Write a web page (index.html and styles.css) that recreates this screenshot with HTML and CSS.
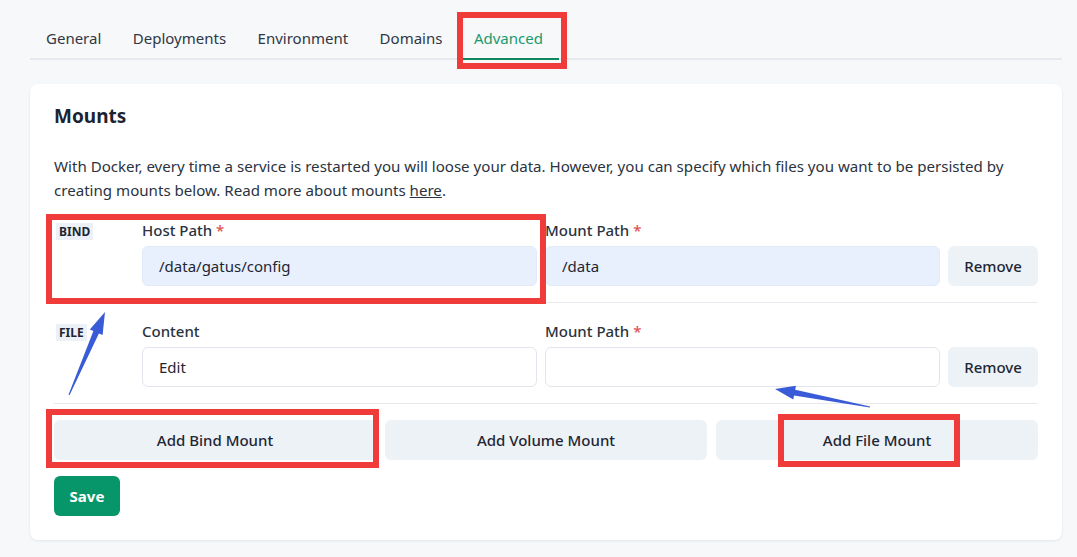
FILE: index.html
```html
<!DOCTYPE html>
<html lang="en">
<head>
<meta charset="utf-8">
<title>Advanced - Mounts</title>
<link rel="stylesheet" href="styles.css">
</head>
<body>
<div class="page">
  <nav class="tabs">
    <a class="tab">General</a>
    <a class="tab">Deployments</a>
    <a class="tab">Environment</a>
    <a class="tab">Domains</a>
    <a class="tab active">Advanced</a>
  </nav>

  <section class="card">
    <h2 class="title">Mounts</h2>
    <p class="desc">With Docker, every time a service is restarted you will loose your data. However, you can specify which files you want to be persisted by creating mounts below. Read more about mounts <a class="link">here</a>.</p>

    <div class="mount">
      <span class="badge">BIND</span>
      <div class="field">
        <label class="label">Host Path <span class="req">*</span></label>
        <div class="input filled">/data/gatus/config</div>
      </div>
      <div class="field">
        <label class="label">Mount Path <span class="req">*</span></label>
        <div class="input filled">/data</div>
      </div>
      <button class="btn remove">Remove</button>
    </div>

    <div class="mount">
      <span class="badge">FILE</span>
      <div class="field">
        <label class="label">Content</label>
        <div class="input">Edit</div>
      </div>
      <div class="field">
        <label class="label">Mount Path <span class="req">*</span></label>
        <div class="input"></div>
      </div>
      <button class="btn remove">Remove</button>
    </div>

    <div class="add-row">
      <button class="btn add">Add Bind Mount</button>
      <button class="btn add">Add Volume Mount</button>
      <button class="btn add">Add File Mount</button>
    </div>

    <button class="btn save">Save</button>
  </section>

  <div class="mark mark-tab"></div>
  <div class="mark mark-bind"></div>
  <div class="mark mark-addbind"></div>
  <div class="mark mark-addfile"></div>
  <svg class="arrows" width="1077" height="557" viewBox="0 0 1077 557">
    <polygon points="69.5,395.2 98.9,333.4 102.6,335.0 105,312 89.8,329.4 93.4,331.0 68.5,394.8"/>
    <polygon points="870.1,406.5 795.2,389.8 795.9,385.8 775,389 793.3,399.6 794.0,395.6 869.9,407.5"/>
  </svg>
</div>
</body>
</html>
```

FILE: styles.css
```css
* { box-sizing: border-box; }

html, body {
  margin: 0;
  padding: 0;
}

body {
  background: #f7f8fa;
  font-family: "Noto Sans", "Open Sans", sans-serif;
  color: #1f2633;
  font-size: 15px;
}

.page {
  position: relative;
  width: 1077px;
  height: 557px;
  padding: 18px 15px 0 30px;
  overflow: hidden;
}

.tabs {
  display: flex;
  border-bottom: 2px solid #e6e9ef;
  height: 42px;
}

.tab {
  padding: 9px 16px 0;
  font-size: 15px;
  line-height: 22px;
  color: #2f3744;
  height: 42px;
}

.tab + .tab {
  margin-left: -0.5px;
}

.tab.active {
  color: #1a9a6c;
  border-bottom: 2px solid #12875e;
  margin-bottom: -2px;
  height: 42px;
}

.card {
  margin-top: 24px;
  background: #fff;
  border-radius: 8px;
  box-shadow: 0 1px 3px rgba(0, 0, 0, 0.08);
  padding: 20px 24px 24px;
}

.title {
  margin: 0;
  font-size: 19px;
  line-height: 24px;
  font-weight: 700;
  color: #1c2330;
}

.desc {
  margin: 26px 0 0;
  font-size: 15.1px;
  line-height: 24px;
  color: #2b3340;
}

.link {
  color: #2b3340;
  text-decoration: underline;
}

.mount {
  display: grid;
  grid-template-columns: 80px 1fr 1fr 90px;
  column-gap: 8px;
  align-items: end;
  padding: 18px 0 16px;
  border-bottom: 1px solid #e6e9ee;
}

.badge {
  align-self: start;
  justify-self: start;
  margin-top: 3px;
  margin-left: 2px;
  background: #ecf1f7;
  font-size: 12px;
  font-weight: 700;
  line-height: 17px;
  padding: 0 3px;
  color: #1f2633;
}

.field {
  display: flex;
  flex-direction: column;
  gap: 6px;
}

.label {
  font-size: 15px;
  line-height: 20px;
  font-weight: 500;
  color: #2b3340;
}

.req {
  color: #e05252;
}

.input {
  height: 40px;
  border: 1px solid #e2e6ec;
  border-radius: 6px;
  padding: 0 16px;
  display: flex;
  align-items: center;
  font-size: 15px;
  color: #1f2633;
  background: #fff;
}

.input.filled {
  background: #e8f0fe;
  border-color: #e3eaf7;
}

.btn {
  font-family: inherit;
  font-size: 15px;
  font-weight: 500;
  border: none;
  border-radius: 6px;
  height: 40px;
  color: #1f2633;
  background: #edf2f7;
  cursor: pointer;
}

.remove {
  width: 90px;
}

.add-row {
  display: flex;
  gap: 9px;
  margin-top: 16px;
}

.add {
  flex: 1;
}

.save {
  margin-top: 16px;
  width: 66px;
  background: #079669;
  color: #fff;
  font-weight: 700;
}

.mark {
  position: absolute;
  border: 6px solid #f03b3b;
  pointer-events: none;
}

.mark-tab { left: 457px; top: 12px; width: 110px; height: 57px; }
.mark-bind { left: 46px; top: 214px; width: 500px; height: 90px; }
.mark-addbind { left: 46px; top: 409px; width: 333px; height: 59px; }
.mark-addfile { left: 778px; top: 414px; width: 182px; height: 53px; }

.arrows {
  position: absolute;
  left: 0;
  top: 0;
  pointer-events: none;
}

.arrows polygon {
  fill: #3a5bd8;
}
```
